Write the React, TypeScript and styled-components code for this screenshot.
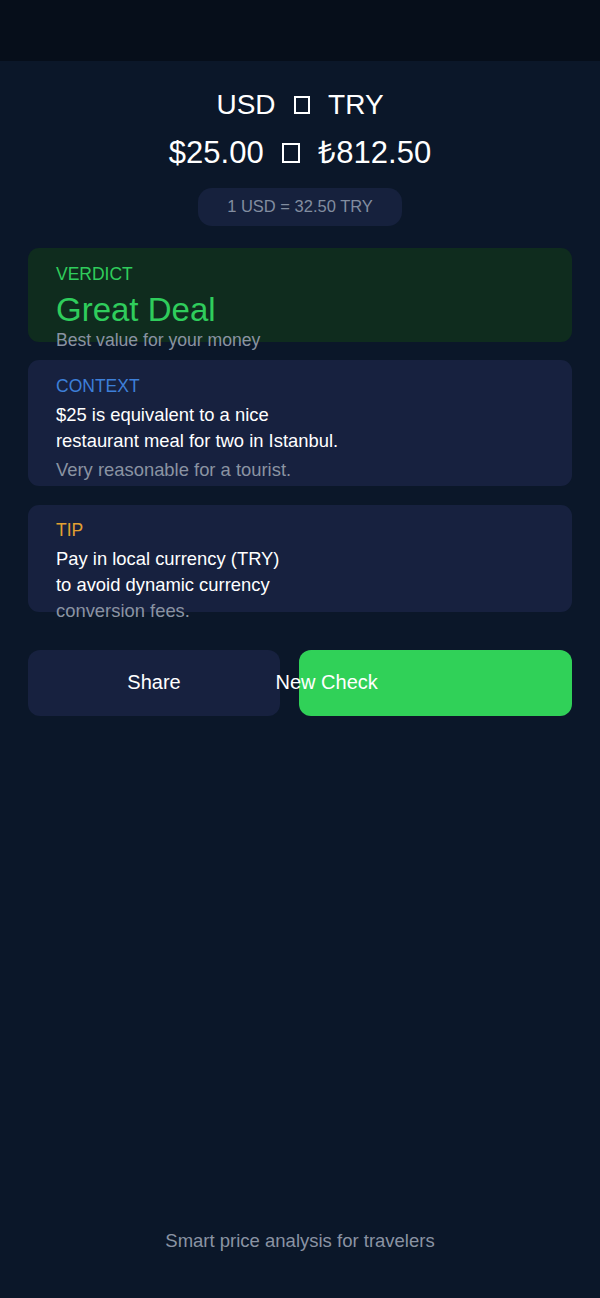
import React from "react";
import styled, { createGlobalStyle } from "styled-components";

const GlobalStyle = createGlobalStyle`
  html, body { margin: 0; padding: 0; background: #0b1729; }
  body { font-family: "Liberation Sans", Arial, Helvetica, sans-serif; }
  * { box-sizing: border-box; }
`;

const Page = styled.div`
  min-height: 1298px;
  display: flex;
  flex-direction: column;
  background: #0b1729;
  color: #ffffff;
`;

const TopBar = styled.div`
  height: 61px;
  background: #060e1a;
  flex-shrink: 0;
`;

const Main = styled.main`
  flex: 1;
  display: flex;
  flex-direction: column;
  padding: 27.5px 28px 0;
`;

const Header = styled.header`
  display: flex;
  flex-direction: column;
  align-items: center;
`;

const Pair = styled.div`
  font-size: 28px;
  line-height: 32px;
  text-align: center;
`;

const Amount = styled.div`
  margin-top: 14px;
  font-size: 31px;
  line-height: 36px;
  text-align: center;
`;

const Missing = styled.span<{ $w: number; $h: number; $gap: number }>`
  display: inline-block;
  width: ${(p) => p.$w}px;
  height: ${(p) => p.$h}px;
  border: 2px solid #ffffff;
  margin: 0 ${(p) => p.$gap}px;
`;

const RatePill = styled.div`
  margin-top: 17px;
  height: 38px;
  padding: 0 29px;
  border-radius: 14px;
  background: #16213d;
  color: #828da0;
  font-size: 16.5px;
  line-height: 19px;
  display: flex;
  align-items: center;
`;

const Cards = styled.div`
  margin-top: 22.7px;
  display: flex;
  flex-direction: column;
  gap: 18.5px;
`;

const Card = styled.section<{ $h: number; $tone: "green" | "blue" }>`
  height: ${(p) => p.$h}px;
  border-radius: 11px;
  padding: 15.5px 28px 0;
  background: ${(p) => (p.$tone === "green" ? "#0f2c1e" : "#17213f")};
  display: flex;
  flex-direction: column;
`;

const Label = styled.div<{ $color: string }>`
  font-size: 17.5px;
  line-height: 20px;
  color: ${(p) => p.$color};
  text-transform: uppercase;
`;

const Verdict = styled.div`
  margin-top: 7.4px;
  font-size: 33px;
  line-height: 38px;
  color: #2fcd5c;
`;

const Subtle = styled.div<{ $mt: number; $size: number; $lh: number }>`
  margin-top: ${(p) => p.$mt}px;
  font-size: ${(p) => p.$size}px;
  line-height: ${(p) => p.$lh}px;
  color: #8a93a2;
  white-space: nowrap;
`;

const Body = styled.div`
  margin-top: 6px;
  font-size: 18.4px;
  line-height: 26px;
  color: #ffffff;
`;

const Actions = styled.div`
  margin-top: 37.6px;
  display: grid;
  grid-template-columns: 252px 1fr;
  gap: 18.5px;
`;

const ActionButton = styled.button<{ $primary?: boolean }>`
  height: 66px;
  border: none;
  border-radius: 12px;
  font-family: inherit;
  font-size: 20px;
  color: #ffffff;
  background: ${(p) => (p.$primary ? "#30d158" : "#17213f")};
  display: flex;
  align-items: center;
  justify-content: ${(p) => (p.$primary ? "flex-start" : "center")};
  padding: 0;
  overflow: visible;
  cursor: pointer;
`;

const OffsetLabel = styled.span`
  margin-left: -23px;
  white-space: nowrap;
`;

const Footer = styled.footer`
  padding-bottom: 46.4px;
  text-align: center;
  font-size: 18.5px;
  line-height: 22px;
  color: #8a93a3;
`;

export default function App() {
  return (
    <>
      <GlobalStyle />
      <Page>
        <TopBar />
        <Main>
          <Header>
            <Pair>
              USD
              <Missing $w={16.5} $h={17.6} $gap={18} aria-hidden="true" />
              TRY
            </Pair>
            <Amount>
              $25.00
              <Missing $w={17.7} $h={19.6} $gap={18.5} aria-hidden="true" />
              ₺812.50
            </Amount>
            <RatePill>1 USD = 32.50 TRY</RatePill>
          </Header>

          <Cards>
            <Card $h={93.7} $tone="green">
              <Label $color="#2fcd5c">Verdict</Label>
              <Verdict>Great Deal</Verdict>
              <Subtle $mt={1.2} $size={17.6} $lh={20}>
                Best value for your money
              </Subtle>
            </Card>

            <Card $h={125.7} $tone="blue">
              <Label $color="#3d7fd8">Context</Label>
              <Body>
                $25 is equivalent to a nice
                <br />
                restaurant meal for two in Istanbul.
              </Body>
              <Subtle $mt={3.5} $size={18.4} $lh={26}>
                Very reasonable for a tourist.
              </Subtle>
            </Card>

            <Card $h={107.4} $tone="blue">
              <Label $color="#e2a032">Tip</Label>
              <Body>
                Pay in local currency (TRY)
                <br />
                to avoid dynamic currency
              </Body>
              <Subtle $mt={0} $size={18.4} $lh={26}>
                conversion fees.
              </Subtle>
            </Card>
          </Cards>

          <Actions>
            <ActionButton>Share</ActionButton>
            <ActionButton $primary>
              <OffsetLabel>New Check</OffsetLabel>
            </ActionButton>
          </Actions>
        </Main>
        <Footer>Smart price analysis for travelers</Footer>
      </Page>
    </>
  );
}
